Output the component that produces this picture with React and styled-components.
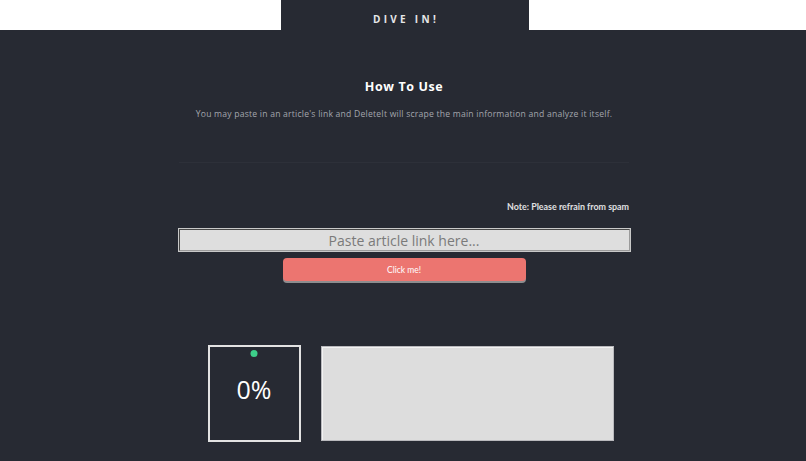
import React from "react";
import styled, { createGlobalStyle } from "styled-components";

const Global = createGlobalStyle`
  html, body { margin: 0; padding: 0; background: #272a33; }
  body { font-family: "Open Sans", "Noto Sans", sans-serif; }
  * { box-sizing: border-box; }
`;

const TopBar = styled.header`
  display: flex;
  justify-content: center;
  background: #ffffff;
  height: 30px;
`;

const Tab = styled.div`
  width: 248px;
  margin-left: 3px;
  background: #272a33;
  display: flex;
  align-items: center;
  justify-content: center;
  padding-top: 8px;
  padding-left: 3px;
  color: #e6e6e8;
  font-size: 10px;
  font-weight: 700;
  letter-spacing: 3.3px;
`;

const Main = styled.main`
  display: flex;
  flex-direction: column;
  align-items: center;
  padding-top: 46px;
  padding-left: 2px;
  min-height: 431px;
`;

const Title = styled.h2`
  margin: 0;
  color: #ffffff;
  font-size: 12.5px;
  font-weight: 700;
  letter-spacing: 0.6px;
  line-height: 22px;
`;

const Subtitle = styled.p`
  margin: 8px 0 0;
  color: #a3a6ad;
  font-size: 8.6px;
  letter-spacing: 0.22px;
  line-height: 16px;
`;

const Divider = styled.hr`
  width: 450px;
  margin: 40px 0 0;
  border: none;
  border-top: 1px solid #2d3039;
`;

const NoteRow = styled.div`
  width: 450px;
  margin-top: 37px;
  overflow: hidden;
  display: flex;
  justify-content: flex-start;
`;

const Note = styled.span`
  margin-left: 328px;
  white-space: nowrap;
  color: #e0e0e2;
  font-family: "Lato", sans-serif;
  font-size: 8.9px;
  font-weight: 700;
  line-height: 14px;
`;

const LinkInput = styled.input`
  margin-top: 14px;
  width: 453px;
  height: 24px;
  background: #dedede;
  border: 2px inset #9a9a9a;
  outline: 1px solid #c9c9c9;
  outline-offset: -1px;
  text-align: center;
  font-family: "Open Sans", sans-serif;
  font-size: 14px;
  color: #555;
  padding: 0;
  &::placeholder { color: #7a7a7a; }
`;

const Button = styled.button`
  margin-top: 6px;
  width: 243px;
  height: 23px;
  border: none;
  border-radius: 4px;
  background: #ec7570;
  box-shadow: 0 2px 0 #8d8d8f;
  color: #ffffff;
  font-family: "Lato", sans-serif;
  font-size: 8.5px;
  cursor: pointer;
`;

const Results = styled.section`
  margin-top: 64px;
  display: flex;
  align-items: flex-start;
  gap: 20px;
  margin-left: 13px;
`;

const ScoreBox = styled.div`
  position: relative;
  width: 93px;
  height: 97px;
  border: 2px solid #e2e2e2;
  display: flex;
  align-items: center;
  justify-content: center;
  padding-bottom: 10px;
  color: #ffffff;
  font-size: 25px;
  font-family: "Open Sans", sans-serif;
`;

const Dot = styled.span`
  position: absolute;
  top: 3px;
  left: 50%;
  transform: translateX(-50%);
  width: 7px;
  height: 7px;
  border-radius: 50%;
  background: #3dcf8a;
`;

const OutputBox = styled.div`
  margin-top: 1px;
  width: 293px;
  height: 95px;
  background: #dddddd;
  border: 1px solid #b9b9bd;
  box-shadow: inset 1px 1px 0 #f2f2f2;
`;

export default function App() {
  return (
    <>
      <Global />
      <TopBar>
        <Tab>DIVE IN!</Tab>
      </TopBar>
      <Main>
        <Title>How To Use</Title>
        <Subtitle>
          You may paste in an article's link and DeleteIt will scrape the main information and analyze it itself.
        </Subtitle>
        <Divider />
        <NoteRow>
          <Note>Note: Please refrain from spamming the button.</Note>
        </NoteRow>
        <LinkInput placeholder="Paste article link here..." />
        <Button>Click me!</Button>
        <Results>
          <ScoreBox>
            <Dot />
            0%
          </ScoreBox>
          <OutputBox />
        </Results>
      </Main>
    </>
  );
}
